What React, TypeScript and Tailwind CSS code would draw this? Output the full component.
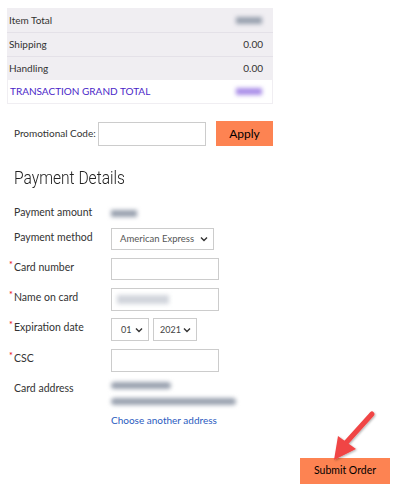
import React from "react";

const font = { fontFamily: "Lato, 'Open Sans', sans-serif" };

function Chevron() {
  return (
    <svg width="8" height="6" viewBox="0 0 8 6" className="shrink-0">
      <path d="M1 1.5 L4 4.5 L7 1.5" fill="none" stroke="#333" strokeWidth="1.4" />
    </svg>
  );
}

function Blur({ w, color = "bg-gray-400" }: { w: string; color?: string }) {
  return <div className={`h-[7px] rounded-sm blur-[2px] ${color} ${w}`} />;
}

function Row({ label, children, req }: { label: string; children: React.ReactNode; req?: boolean }) {
  return (
    <div className="flex items-start">
      <div className="w-[111px] pl-[9px] flex text-[10.5px] text-[#333] pt-[2px] whitespace-nowrap">
        <span className="w-[5px] text-red-600 text-[9px] leading-[10px]">{req ? "*" : ""}</span>
        <span>{label}</span>
      </div>
      <div>{children}</div>
    </div>
  );
}

export default function App() {
  return (
    <div className="w-[409px] h-[492px] bg-white relative overflow-hidden" style={font}>
      <div className="pt-[8px] pl-[7px]">
        <div className="w-[266px] bg-[#f0eef2] text-[10px] text-[#333]">
          <div className="flex justify-between items-center h-[25px] px-[2px] pr-[11px] border-b border-[#e4e1e8]">
            <span>Item Total</span>
            <div className="w-[26px] h-[7px] bg-gray-400 blur-[2px]" />
          </div>
          <div className="flex justify-between items-center h-[24px] px-[2px] pr-[10px] border-b border-[#e4e1e8]">
            <span>Shipping</span>
            <span>0.00</span>
          </div>
          <div className="flex justify-between items-center h-[23px] px-[2px] pr-[10px]">
            <span>Handling</span>
            <span>0.00</span>
          </div>
          <div className="flex justify-between items-center h-[24px] px-[2px] pr-[10px] bg-white border-x border-b border-[#f0eef2] text-[#4a1fc8]">
            <span>TRANSACTION GRAND TOTAL</span>
            <div className="w-[26px] h-[7px] bg-[#a98ee8] blur-[2px]" />
          </div>
        </div>
      </div>

      <div className="flex items-center pl-[14px] mt-[17px]">
        <span className="text-[10px] text-[#333] w-[84px]">Promotional Code:</span>
        <div className="w-[108px] h-[24px] border border-[#ccc]" />
        <div className="ml-[10px] w-[57px] h-[25px] bg-[#fd8352] flex items-center justify-center text-[12px] text-black">
          Apply
        </div>
      </div>

      <div className="pl-[14px] mt-[20px]">
        <div
          className="text-[19px] leading-[24px] text-[#222] font-light origin-left scale-x-[0.82] whitespace-nowrap"
          style={{ fontFamily: "Roboto, sans-serif" }}
        >
          Payment Details
        </div>
      </div>

      <div className="mt-[16px] flex flex-col">
        <div className="flex items-center h-[14px]">
          <div className="w-[111px] pl-[14px] text-[10.5px] text-[#333]">Payment amount</div>
          <div className="w-[26px] h-[7px] bg-gray-400 blur-[2px]" />
        </div>
        <div className="mt-[8px]">
          <Row label="Payment method">
            <div className="w-[103px] h-[22px] border border-[#ccc] flex items-center justify-between pl-[8px] pr-[5px] text-[9.5px] text-[#555] whitespace-nowrap">
              <span>American Express</span>
              <Chevron />
            </div>
          </Row>
        </div>
        <div className="mt-[8px]">
          <Row label="Card number" req>
            <div className="w-[108px] h-[22px] border border-[#ccc]" />
          </Row>
        </div>
        <div className="mt-[8px]">
          <Row label="Name on card" req>
            <div className="w-[108px] h-[23px] border border-[#ccc] flex items-center pl-[5px]">
              <div className="w-[52px] h-[9px] bg-gray-300 blur-[2px]" />
            </div>
          </Row>
        </div>
        <div className="mt-[7px]">
          <Row label="Expiration date" req>
            <div className="flex gap-[4px]">
              <div className="w-[38px] h-[23px] border border-[#ccc] flex items-center justify-between pl-[9px] pr-[5px] text-[9px] text-[#444]">
                <span>01</span>
                <Chevron />
              </div>
              <div className="w-[44px] h-[23px] border border-[#ccc] flex items-center justify-between pl-[6px] pr-[5px] text-[9px] text-[#444]">
                <span>2021</span>
                <Chevron />
              </div>
            </div>
          </Row>
        </div>
        <div className="mt-[8px]">
          <Row label="CSC" req>
            <div className="w-[108px] h-[23px] border border-[#ccc]" />
          </Row>
        </div>
        <div className="mt-[7px]">
          <Row label="Card address">
            <div className="flex flex-col pt-[3px]">
              <Blur w="w-[60px]" />
              <div className="mt-[9px]"><Blur w="w-[125px]" /></div>
              <div className="mt-[8px] text-[10px] text-[#2a5bc0]">Choose another address</div>
            </div>
          </Row>
        </div>
      </div>

      <div className="absolute left-[300px] top-[458px] w-[90px] h-[26px] bg-[#fd8352] flex items-center justify-center text-[10.5px] text-black">
        Submit Order
      </div>

      <svg className="absolute left-[320px] top-[405px]" width="70" height="65" viewBox="0 0 70 65">
        <defs>
          <filter id="sh" x="-20%" y="-20%" width="140%" height="140%">
            <feDropShadow dx="1" dy="1" stdDeviation="1" floodColor="#000" floodOpacity="0.3" />
          </filter>
        </defs>
        <g filter="url(#sh)">
          <line x1="52" y1="9" x2="24" y2="40" stroke="#f04545" strokeWidth="5" strokeLinecap="round" />
          <polygon points="14,55 18,31 36,44" fill="#f04545" />
        </g>
      </svg>
    </div>
  );
}
